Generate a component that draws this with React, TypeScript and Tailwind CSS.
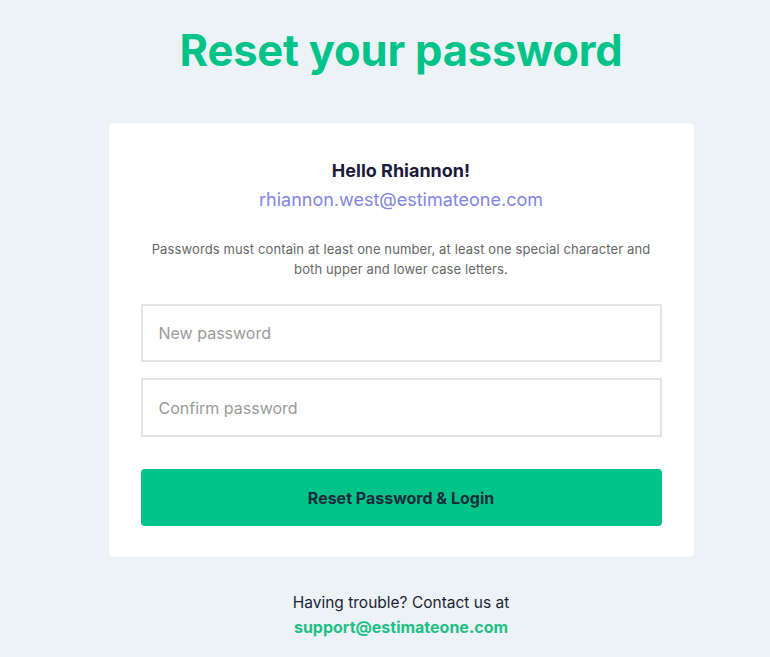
import React from "react";

export default function App() {
  return (
    <div
      className="min-h-[657px] w-full bg-[#edf2f7] pl-[32px]"
      style={{ fontFamily: "Inter, 'Noto Sans', sans-serif" }}
    >
      <div className="flex flex-col items-center pt-[22px]">
        <h1 className="text-[43.5px] font-bold leading-[56px] text-[#00c389] tracking-[-0.2px]">
          Reset your password
        </h1>
        <div className="mt-[45px] w-[585px] rounded-[4px] bg-white px-[32px] pt-[36px] pb-[31px] shadow-[0_0_2px_rgba(0,0,0,0.06)]">
          <div className="text-center text-[18px] font-bold leading-[24px] text-[#1b1a3a]">
            Hello Rhiannon!
          </div>
          <div className="mt-[5px] text-center text-[18px] leading-[24px] text-[#7f86e2]">
            rhiannon.west@estimateone.com
          </div>
          <p className="mx-auto mt-[27px] max-w-[512px] text-center text-[13px] leading-[20px] tracking-[0.12px] text-[#666]">
            Passwords must contain at least one number, at least one special character and both upper and lower case letters.
          </p>
          <div className="mt-[25px] flex flex-col gap-[16px]">
            <input
              type="password"
              placeholder="New password"
              className="h-[58px] w-full border-2 border-[#e4e4e4] bg-white px-[16px] text-[16px] text-[#333] outline-none placeholder:text-[#9a9a9a]"
            />
            <input
              type="password"
              placeholder="Confirm password"
              className="h-[59px] w-full border-2 border-[#e4e4e4] bg-white px-[16px] text-[16px] text-[#333] outline-none placeholder:text-[#9a9a9a]"
            />
          </div>
          <button className="mt-[32px] h-[57px] w-full rounded-[4px] bg-[#00c389] text-[16px] font-bold text-[#1a2b3a]">
            Reset Password &amp; Login
          </button>
        </div>
        <div className="mt-[34px] text-center leading-[24px] text-[#1b1f33]">
          <div className="text-[15.5px]">Having trouble? Contact us at</div>
          <div className="text-[16px] font-bold text-[#1fbf86]">support@estimateone.com</div>
        </div>
      </div>
    </div>
  );
}
